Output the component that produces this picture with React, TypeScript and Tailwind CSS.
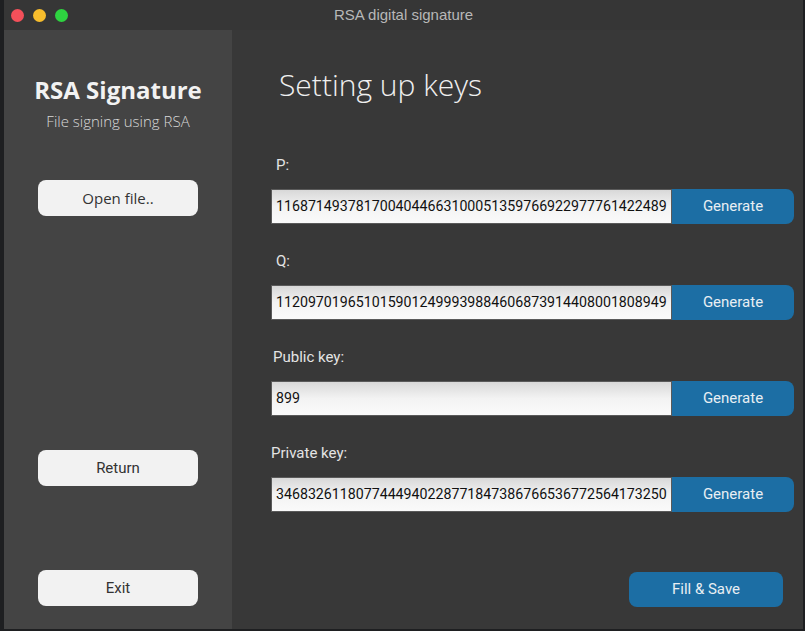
import React from "react";

const rows = [
  { label: "P:", value: "1168714937817004044663100051359766922977761422489", ml: "ml-[5px]" },
  { label: "Q:", value: "1120970196510159012499939884606873914408001808949", ml: "ml-[5px]" },
  { label: "Public key:", value: "899", ml: "ml-[2px]" },
  { label: "Private key:", value: "3468326118077444940228771847386766536772564173250", ml: "ml-0" },
];

export default function App() {
  return (
    <div className="w-[805px] h-[631px] bg-[#1e1f21] flex pl-[4px] pr-[2px] pb-[2px] overflow-hidden">
      <div className="flex-1 flex flex-col bg-[#383838] overflow-hidden">
        {/* title bar */}
        <div className="h-[30px] shrink-0 bg-[#363636] flex items-center relative pl-[7px]">
          <div className="flex gap-[9px]">
            <span className="w-[13px] h-[13px] rounded-full bg-[#f4505a]" />
            <span className="w-[13px] h-[13px] rounded-full bg-[#f7bd2d]" />
            <span className="w-[13px] h-[13px] rounded-full bg-[#2ed340]" />
          </div>
          <div className="absolute inset-0 flex items-center justify-center text-[15px] text-[#b8b8b8] font-['Liberation_Sans',sans-serif] pointer-events-none">
            RSA digital signature
          </div>
        </div>
        <div className="flex-1 flex">
          {/* sidebar */}
          <div className="w-[228px] bg-[#444444] flex flex-col items-center font-['Open_Sans',sans-serif]">
            <div className="mt-[44px] text-[24px] leading-[32px] font-bold text-[#f2f2f2]">RSA Signature</div>
            <div className="mt-[5px] text-[15px] leading-[20px] text-[#d8d8d8] font-light">File signing using RSA</div>
            <button className="mt-[49px] w-[160px] h-[36px] rounded-[8px] bg-[#f2f2f2] text-[15px] text-[#333]">Open file..</button>
            <button className="mt-[234px] w-[160px] h-[36px] rounded-[8px] bg-[#f2f2f2] text-[15px] text-[#333] font-['Roboto',sans-serif]">Return</button>
            <button className="mt-[84px] w-[160px] h-[36px] rounded-[8px] bg-[#f2f2f2] text-[15px] text-[#333] font-['Roboto',sans-serif]">Exit</button>
          </div>
          {/* main */}
          <div className="flex-1 flex flex-col pl-[39px] pr-[9px] font-['Roboto',sans-serif]">
            <div className="mt-[35px] ml-[8px] text-[30px] leading-[40px] font-light text-[#f0f0f0] font-['Open_Sans',sans-serif]">
              Setting up keys
            </div>
            <div className="mt-[50px] flex flex-col gap-[27px]">
              {rows.map((r) => (
                <div key={r.label} className="flex flex-col">
                  <div className={`text-[15px] leading-[20px] text-[#e4e4e4] ${r.ml}`}>{r.label}</div>
                  <div className="mt-[14px] flex h-[35px]">
                    <div className="w-[401px] shrink-0 h-full border border-[#5a5a5a] bg-gradient-to-b from-[#d8d8d8] via-[#f3f3f3] to-[#fafafa] overflow-hidden whitespace-nowrap text-[14.2px] leading-[33px] text-[#111] pl-[4px]">
                      {r.value}
                    </div>
                    <button className="flex-1 h-full bg-[#1c6ea4] rounded-r-[8px] text-[15px] text-[#e8eef3]">Generate</button>
                  </div>
                </div>
              ))}
            </div>
            <div className="flex justify-end mt-[60px] mr-[11px]">
              <button className="w-[154px] h-[35px] rounded-[8px] bg-[#1c6ea4] text-[15px] text-[#e8eef3]">Fill &amp; Save</button>
            </div>
          </div>
        </div>
      </div>
    </div>
  );
}
